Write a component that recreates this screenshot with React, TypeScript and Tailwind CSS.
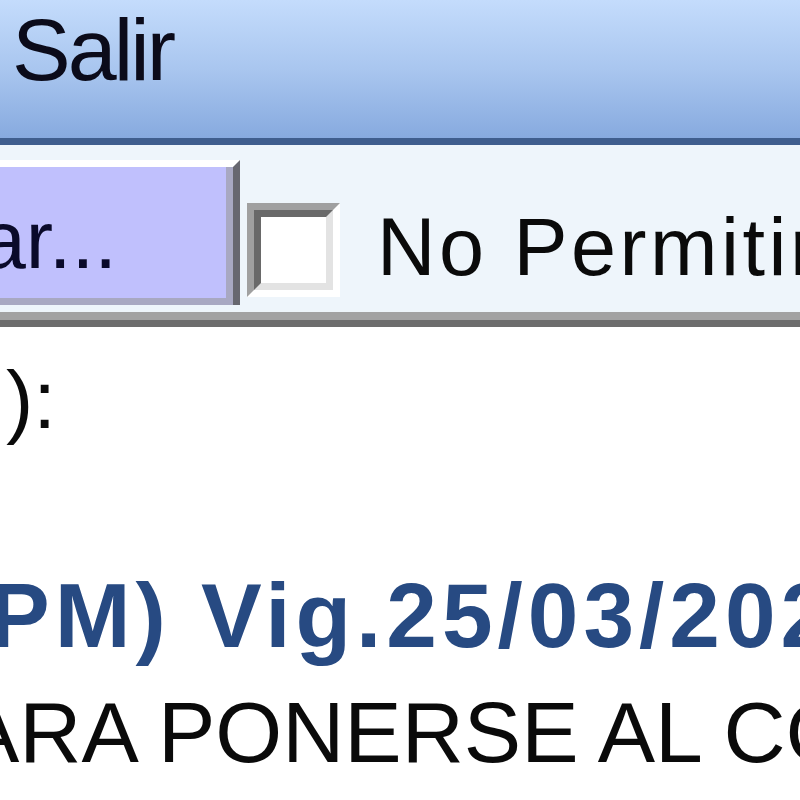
import React from "react";

const sans = { fontFamily: '"Liberation Sans", Arial, sans-serif' };

export default function App() {
  return (
    <div className="h-[800px] w-[800px] overflow-hidden bg-white" style={sans}>
      {/* Menu bar */}
      <div className="h-[145px] border-b-[7px] border-b-[#3f5e8e] bg-gradient-to-b from-[#c4dcfc] via-[#a9c6ef] to-[#87aadf] pl-[12px] pt-[6px]">
        <span className="block text-[88px] leading-none tracking-[-3px] text-[#0b0b1a]">Salir</span>
      </div>

      {/* Toolbar row */}
      <div className="flex h-[167px] items-start bg-[#eef5fb]">
        <div className="mt-[15px] flex h-[145px] w-[240px] shrink-0 items-start justify-end overflow-hidden border-r-[7px] border-t-[7px] border-r-[#67676f] border-t-white bg-[#c0c0fd] pr-[116px] shadow-[inset_-7px_-7px_0_#a8a8c2]">
          <span className="mt-[32px] shrink-0 whitespace-nowrap text-[82px] leading-none text-[#0a0a2a]">Buscar...</span>
        </div>
        {/* Checkbox */}
        <div className="ml-[7px] mt-[58px] shrink-0 border-[7px] border-b-white border-l-[#a0a0a0] border-r-white border-t-[#a0a0a0]">
          <div className="h-[80px] w-[79px] border-[7px] border-b-[#e3e3e3] border-l-[#696969] border-r-[#e3e3e3] border-t-[#696969] bg-white" />
        </div>
        <span className="ml-[37px] mt-[62px] shrink-0 whitespace-nowrap text-[81px] leading-none tracking-[3.5px] text-[#0a0a0a]">
          No Permitir Cambios
        </span>
      </div>
      <div className="h-[8px] bg-[#a2a2a2]" />
      <div className="h-[7px] bg-[#6d6d6d]" />

      {/* Content */}
      <div className="flex flex-col overflow-hidden">
        <div className="ml-[6px] mt-[32px] whitespace-nowrap text-[82px] leading-none text-[#0a0a0a]">):</div>
        <div className="ml-[-11px] mt-[129px] whitespace-nowrap text-[91px] font-bold leading-none tracking-[5px] text-[#274a82]">
          PM) Vig.25/03/2020
        </div>
        <div className="ml-[-38px] mt-[28px] whitespace-nowrap text-[86px] leading-none text-[#0a0a0a]">
          ARA PONERSE AL CORRIENTE
        </div>
      </div>
    </div>
  );
}
